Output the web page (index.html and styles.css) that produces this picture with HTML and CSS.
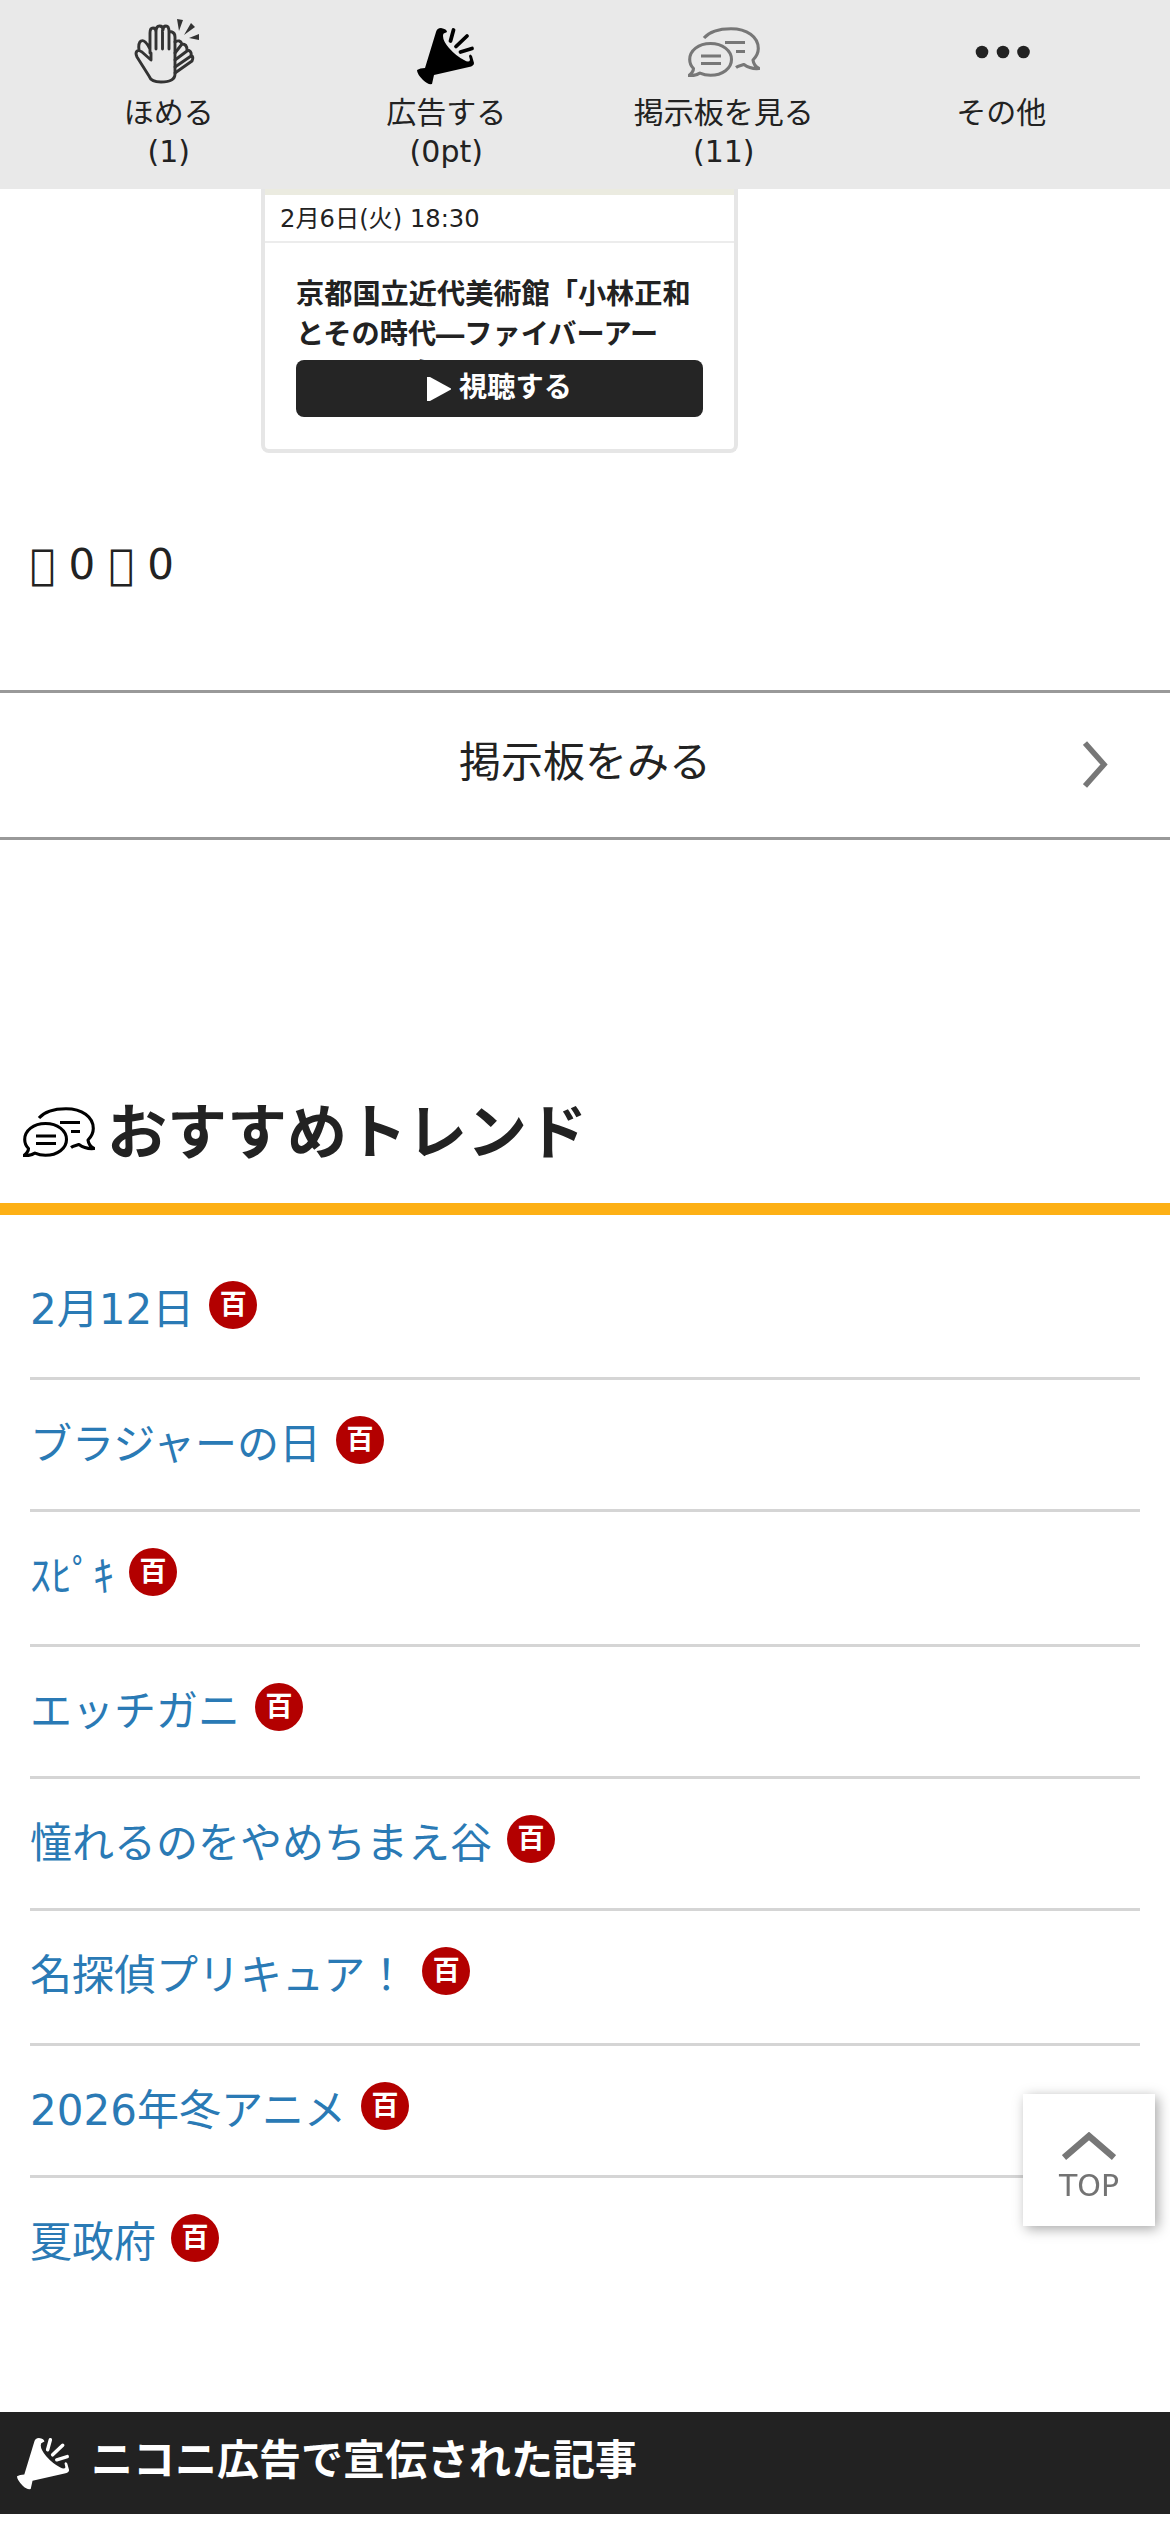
FILE: index.html
```html
<!DOCTYPE html>
<html lang="ja">
<head>
<meta charset="utf-8">
<title>ニコニコ大百科</title>
<link rel="stylesheet" href="styles.css">
</head>
<body>
<svg class="sprite" aria-hidden="true">
  <symbol id="horn" viewBox="0 0 58 58">
    <path d="M19 5Q20 1 24 1Q30 2 30 5L28 6Q26 6 26 9Q26 14 32 21Q39 29 47 33Q52 36 53 33L52 29Q53 26 55 29L57 36Q57 39 52 40L17 48L15 57Q11 58 6 53Q0 47 0 43Q3 41 8 41Z" fill="currentColor"/>
    <path d="M33.500 14L36.500 3M39 19.500L50 9M43.500 25L55 21.500" fill="none" stroke="currentColor" stroke-width="3.800" stroke-linecap="round"/>
  </symbol>
  <symbol id="talk" viewBox="0 0 72 50">
    <g fill="none" stroke="currentColor" stroke-width="3.100" stroke-linejoin="round">
      <path d="M16 11C22 4 32 1.700 43 1.700C59 1.700 70.300 10 70.300 21.500C70.300 26 68 30 65 33C65.500 37 68 40 71 41.500C65 42 60 40.500 56 37.500C53 38.500 50 39 48 40.500"/>
      <path d="M22.500 16.500C34.500 16.500 43.500 23.500 43.500 32.500C43.500 41.500 34.500 48.300 22.500 48.300C18.500 48.300 15 47.500 12 46.100C9 48.400 5 48.800 1 48.500C4 46 5.500 43.500 5.500 41.500C3 39 1.700 36 1.700 32.500C1.700 23.500 10.500 16.500 22.500 16.500Z"/>
      <path d="M37 15.500H57M48 24.500H57M13 29H33M13 36.500H33"/>
    </g>
  </symbol>
</svg>

<header class="toolbar">
  <a class="tool">
    <svg class="tool-icon" viewBox="0 0 72 72">
      <g fill="none" stroke="#333" stroke-width="2.900" stroke-linejoin="round" stroke-linecap="round">
        <path d="M17 34V14Q17 9 20 9Q23 9 23 13Q23 7 26.500 7Q30 7 30 11Q30 7 33 7Q36 7 36 13Q37 12 39 13Q42 14 42 18V55Q42 63 28 63Q18 63 16 57L4 38Q2 34 4 32Q6 31 9 33L18 41V34M23 13V30M29.500 11V30M36 12V30M6 31Q5 24 8 22Q12 20 17 30"/>
        <path d="M42 23Q47 20 49 25Q54 25 54 31Q59 32 58 36Q61 38 59 42L42 54M42 34L49 25M42 41L54 32M42 48L58 37"/>
      </g>
      <path d="M44 0L50 1L46 12ZM51 16L58 4L62 8ZM56 19L66 15V21Z" fill="#333"/>
    </svg>
    <span>ほめる<br>(1)</span>
  </a>
  <a class="tool">
    <svg class="tool-icon horn"><use href="#horn"/></svg>
    <span>広告する<br>(0pt)</span>
  </a>
  <a class="tool">
    <svg class="tool-icon talk"><use href="#talk"/></svg>
    <span>掲示板を見る<br>(11)</span>
  </a>
  <a class="tool">
    <svg class="tool-icon" viewBox="0 0 72 72"><g fill="#222"><circle cx="17" cy="33" r="6.300"/><circle cx="38" cy="33" r="6.300"/><circle cx="58.500" cy="33" r="6.300"/></g></svg>
    <span>その他</span>
  </a>
</header>

<main>
  <article class="program">
    <div class="program-thumb"></div>
    <div class="program-date">2月6日(火) 18:30</div>
    <div class="program-body">
      <p class="program-title">京都国立近代美術館「小林正和<br>とその時代―ファイバーアー<br>ト、その向こう」</p>
      <a class="watch"><svg class="play" viewBox="0 0 24 24"><path d="M0 0H3L24 11.500V12.500L3 24H0Z" fill="#fff"/></svg>視聴する</a>
    </div>
  </article>

  <p class="counts">&#xE900; 0 &#xE900; 0</p>

  <a class="board">掲示板をみる<svg class="board-arrow" viewBox="0 0 25 47"><path d="M2 2L21 23.500L2 45" fill="none" stroke="#777" stroke-width="5.500"/></svg></a>

  <section>
    <h2 class="trend-head"><svg class="trend-icon"><use href="#talk"/></svg>おすすめトレンド</h2>
    <ul class="trends">
      <li><a>2月12日</a><span class="badge">百</span></li>
      <li><a>ブラジャーの日</a><span class="badge">百</span></li>
      <li><a>ｽﾋﾟｷ</a><span class="badge">百</span></li>
      <li><a>エッチガニ</a><span class="badge">百</span></li>
      <li><a>憧れるのをやめちまえ谷</a><span class="badge">百</span></li>
      <li><a>名探偵プリキュア！</a><span class="badge">百</span></li>
      <li><a>2026年冬アニメ</a><span class="badge">百</span></li>
      <li><a>夏政府</a><span class="badge">百</span></li>
    </ul>
  </section>

  <h3 class="ad-head"><svg class="ad-icon"><use href="#horn"/></svg>ニコニ広告で宣伝された記事</h3>
</main>

<a class="to-top">
  <svg class="to-top-arrow" viewBox="0 0 54 28"><path d="M2 25.500L27 4L52 25.500" fill="none" stroke="#777" stroke-width="6.500"/></svg>
  TOP
</a>
</body>
</html>
```

FILE: styles.css
```css
* { box-sizing: border-box; }

body {
  margin: 0;
  width: 1170px;
  height: 2532px;
  overflow: hidden;
  background: #fff;
  color: #222;
  font-family: "DejaVu Sans", "Noto Sans CJK JP", sans-serif;
  font-size: 42px;
}

h2, h3, p, ul { margin: 0; padding: 0; }
svg { display: block; flex: none; }
.sprite { width: 0; height: 0; position: absolute; }

.toolbar {
  display: grid;
  grid-template-columns: repeat(4, 1fr);
  height: 189px;
  padding: 19px 30px 0;
  background: #e9e9e9;
}
.tool {
  display: flex;
  flex-direction: column;
  align-items: center;
  gap: 2px;
  font-size: 30px;
  line-height: 39px;
  text-align: center;
}
.tool-icon { width: 72px; height: 72px; }
.horn { width: 58px; padding: 8px 0 6px; color: #000; }
.talk { padding: 8px 0 14px; color: #777; }

.program {
  width: 477px;
  height: 264px;
  margin-left: 261px;
  border: 4px solid #e6e6e6;
  border-top: 0;
  border-radius: 0 0 8px 8px;
}
.program-thumb { height: 6px; background: #ebebe0; }
.program-date {
  height: 48px;
  padding-left: 15px;
  border-bottom: 2px solid #ececec;
  font-size: 24.200px;
  line-height: 48px;
}
.program-body { padding: 32px 31px 0; }
.program-title {
  height: 85px;
  overflow: hidden;
  font-size: 28.200px;
  font-weight: bold;
  line-height: 40px;
  white-space: nowrap;
}
.watch {
  display: flex;
  align-items: center;
  justify-content: center;
  gap: 8px;
  height: 57px;
  padding-bottom: 9px;
  border-radius: 8px;
  background: #252525;
  color: #fff;
  font-size: 28.200px;
  font-weight: bold;
}
.play { width: 24px; height: 24px; margin-top: 9px; }

.counts {
  height: 237px;
  padding: 82px 30px 0;
  line-height: 60px;
}

.board {
  display: flex;
  align-items: center;
  justify-content: flex-end;
  height: 150px;
  padding: 0 62px 14px 0;
  border: solid #999;
  border-width: 3px 0;
}
.board-arrow { width: 25px; height: 47px; margin: 13px 0 0 372px; }

.trend-head {
  display: flex;
  align-items: center;
  gap: 12px;
  height: 165px;
  margin-top: 210px;
  padding: 2px 0 0 23px;
  border-bottom: 12px solid #fdb015;
  font-size: 60px;
}
.trend-icon { width: 72px; height: 50px; color: #000; margin-top: 8px; }

.trends {
  height: 1197px;
  padding: 30px 30px 0;
  list-style: none;
}
.trends li {
  display: flex;
  align-items: flex-start;
  gap: 15px;
  height: 132px;
  padding-top: 41px;
  border-bottom: 3px solid #d5d5d5;
  color: #2a7ab5;
  line-height: 48px;
}
.trends li:first-child,
.trends li:nth-child(3n) { height: 135px; }
.trends li:last-child { border: 0; }
.badge {
  width: 48px;
  height: 48px;
  margin-top: -5px;
  border-radius: 50%;
  background: #b30000;
  color: #fff;
  font-size: 27px;
  font-weight: bold;
  line-height: 48px;
  text-align: center;
}

.ad-head {
  display: flex;
  align-items: center;
  gap: 21px;
  height: 102px;
  padding: 0 0 14px 17px;
  background: #222;
  color: #fff;
  font-size: 42px;
}
.ad-icon { width: 53px; height: 53px; margin-top: 15px; }

.to-top {
  position: fixed;
  top: 2094px;
  left: 1023px;
  display: flex;
  flex-direction: column;
  align-items: center;
  width: 132px;
  height: 132px;
  padding-top: 38px;
  background: #fff;
  box-shadow: 3px 3px 12px rgba(0, 0, 0, .35);
  color: #737373;
  font-size: 30px;
  line-height: 40px;
}
.to-top-arrow { width: 54px; height: 28px; margin-bottom: 6px; }
```
